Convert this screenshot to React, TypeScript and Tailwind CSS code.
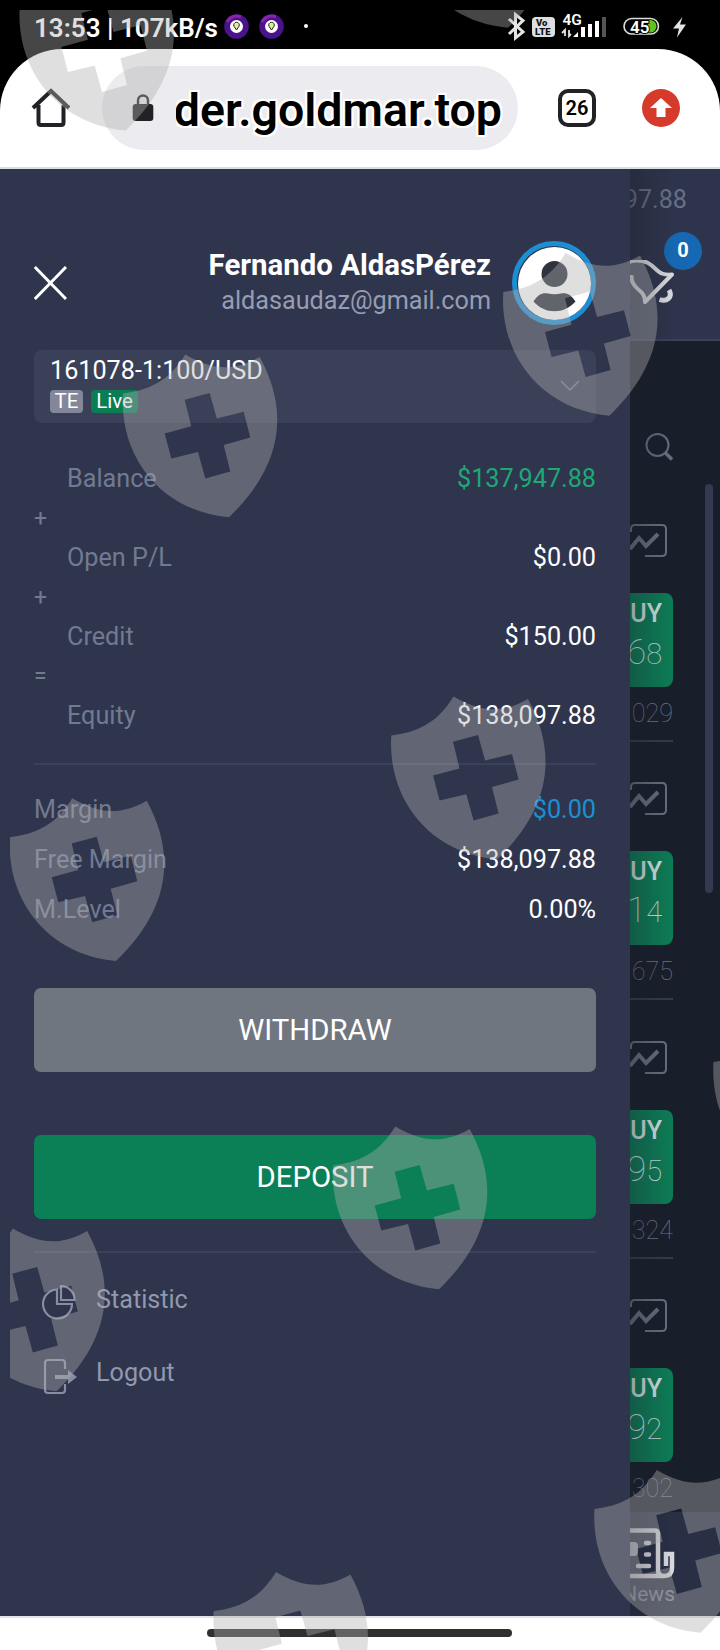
import type { ReactNode } from 'react'

const SHIELD =
  'M0 0C25 -3 46 -12 62.3 -39C90 -22.5 112 -22.5 136.7 -36.6C165 15 162 70 106 123.7C40 118 -4 65 0 0Z' +
  'M61.7 6.2L68.2 32.8L41.7 40L48.3 65L75 58.6L82.3 85L107.3 78L100.7 51.4L127.3 43.9L120.7 18.3L93.8 25L86.7 -.6Z'

const SHIELD_SPOTS = [
  [19.7, 6.9],
  [402, -96],
  [123, 393.5],
  [503.3, 292],
  [391.3, 735.6],
  [10, 837.3],
  [333, 1165.5],
  [-49.5, 1267.5],
  [713.5, 1062],
  [594.5, 1509],
  [213.7, 1611],
]

const QUOTES = [
  { big: '6', small: '8', spread: '029' },
  { big: '1', small: '4', spread: '675' },
  { big: '9', small: '5', spread: '324' },
  { big: '9', small: '2', spread: '302' },
]

function ShieldOverlay() {
  return (
    <svg className="pointer-events-none absolute inset-0 z-30" width="720" height="1650" viewBox="0 0 720 1650">
      <clipPath id="safe">
        <rect x="10" y="10" width="710" height="1640" />
      </clipPath>
      <g clipPath="url(#safe)" fill="#afafaf" fillOpacity=".4" fillRule="evenodd">
        {SHIELD_SPOTS.map(([x, y]) => (
          <path key={`${x}-${y}`} d={SHIELD} transform={`translate(${x} ${y})`} />
        ))}
      </g>
    </svg>
  )
}

function AppBadge() {
  return (
    <svg width="25" height="25" viewBox="0 0 25 25">
      <circle cx="12.5" cy="12.5" r="12.3" fill="#4a138c" />
      <path d="M3 8A11 11 0 0 1 17 3" stroke="#8a24a8" strokeWidth="3" fill="none" />
      <circle cx="12.5" cy="12.5" r="6.5" fill="#fff" />
      <path d="M12.5 16L10 12.300A2.800 2.800 0 1 1 15 12.300Z" fill="#e8e6a0" stroke="#222" strokeWidth="1" />
    </svg>
  )
}

function StatusBar() {
  return (
    <div className="flex h-[49px] items-start">
      <div className="ml-[34px] mt-[12px] w-[188px] whitespace-nowrap text-[26px] leading-[32px] font-semibold text-white">
        13:53 | 107kB/s
      </div>
      <div className="mt-[14px] ml-[2px] flex gap-[10px]">
        <AppBadge />
        <AppBadge />
      </div>
      <div className="mt-[24px] ml-[20px] size-[4px] rounded-full bg-white" />
      <svg className="ml-[198px]" width="183" height="49" viewBox="506 0 183 49" fill="none">
        <path d="M509 19L523 32L515.500 38V14.500L523 20.500L509 34" stroke="#e4e4e4" strokeWidth="3" />
        <rect x="532" y="17" width="23" height="20" rx="4" fill="#dedede" />
        <text x="536" y="25.500" fontSize="9.500" fontWeight="900" fill="#111">Vo</text>
        <text x="535" y="35" fontSize="9.500" fontWeight="900" fill="#111">LTE</text>
        <text x="562.500" y="25" fontSize="15.500" fontWeight="600" fill="#fff">4G</text>
        <path d="M565 36V30L562 33M569 30V36L571 34" stroke="#e4e4e4" strokeWidth="1.800" />
        <path d="M573 37L578 32V37ZM581 37V27H585V37ZM588 37V24H592V37ZM595 37V21H599V37Z" fill="#fff" />
        <path d="M602 37V17H606V37Z" fill="#555" />
        <rect x="624" y="18.500" width="34.500" height="15.500" rx="7.750" stroke="#ddd" strokeWidth="1.600" />
        <path d="M648 20H651A6.300 6.300 0 0 1 651 32.500H648Z" fill="#5fc31f" />
        <text x="630" y="33" fontSize="17" fontWeight="600" fill="#fff" stroke="#000" strokeWidth="2" paintOrder="stroke">45</text>
        <path d="M682.500 17L673 28.500H679L677 37.500L686 24.500H680Z" fill="#e4e4e4" />
      </svg>
    </div>
  )
}

function BrowserBar() {
  return (
    <div className="flex h-[120px] items-start rounded-t-[62px] border-b-2 border-[#d9dde6] bg-white">
      <svg className="mt-[39px] ml-[31px]" width="40" height="40" viewBox="0 0 40 40" fill="none" stroke="#202226" strokeWidth="4">
        <path d="M2 20L20 3L38 20M7.500 17V34.500Q7.500 37 10 37H30Q32.500 37 32.500 34.500V17" />
      </svg>
      <div className="mt-[17px] ml-[31px] flex h-[84px] w-[416px] items-center rounded-full bg-[#ecebf0]">
        <svg className="ml-[30px]" width="22" height="30" viewBox="0 0 22 30">
          <path d="M6 12V7.500A5 5 0 0 1 16 7.500V12" fill="none" stroke="#202226" strokeWidth="2.400" />
          <rect x=".7" y="11" width="20.600" height="17" rx="3" fill="#202226" />
        </svg>
        <div className="ml-[22px] flex h-[70px] w-[328px] justify-end overflow-hidden pr-[2px] text-[46.5px] leading-[74px] font-semibold whitespace-nowrap text-black [text-shadow:2px_0_#fff,-2px_0_#fff,0_2px_#fff,0_-2px_#fff,2px_2px_#fff,-2px_-2px_#fff,2px_-2px_#fff,-2px_2px_#fff]">
          der.goldmar.top
        </div>
      </div>
      <div className="mt-[40px] ml-[40px] flex size-[38px] items-center justify-center rounded-[10px] border-4 border-[#202226] text-[20px] leading-none font-semibold text-black">
        26
      </div>
      <div className="mt-[40px] ml-[46px] flex size-[38px] items-center justify-center rounded-full bg-[#d53a2b]">
        <svg width="22" height="22" viewBox="0 0 22 22" fill="#fff">
          <path d="M11 1L22 11H15.500V20H6.500V11H0Z" />
        </svg>
      </div>
    </div>
  )
}

function Row({ label, value, tone = 'text-white', sign }: { label: string; value: string; tone?: string; sign?: string }) {
  return (
    <>
      <div className="flex h-[40px] items-center justify-between pl-[33px]">
        <span className="text-[#727a92]">{label}</span>
        <span className={tone}>{value}</span>
      </div>
      {sign && <div className="h-[39px] text-[23px] leading-[39px] text-[#727a92]">{sign}</div>}
    </>
  )
}

function MarginRow({ label, value, tone = 'text-white' }: { label: string; value: string; tone?: string }) {
  return (
    <div className="flex h-[50px] items-center justify-between">
      <span className="text-[#727a92]">{label}</span>
      <span className={tone}>{value}</span>
    </div>
  )
}

function MenuItem({ label, children }: { label: string; children: ReactNode }) {
  return (
    <div className="flex h-[73px] items-center">
      <div className="w-[62px] pl-[7px]">{children}</div>
      <span className="text-[#9298ad]">{label}</span>
    </div>
  )
}

function Drawer() {
  return (
    <aside className="flex w-[630px] flex-col bg-[#2f354d] px-[34px] text-[25.2px] leading-[32px]">
      <header className="mt-[72px] flex h-[84px] items-center">
        <svg width="33" height="34" viewBox="0 0 33 34" stroke="#fff" strokeWidth="3">
          <path d="M.8 1L32 33M32 1L.8 33" />
        </svg>
        <div className="ml-auto pb-[1px] text-right">
          <div className="text-[29.4px] leading-[35px] font-bold text-white">Fernando AldasPérez</div>
          <div className="leading-[35px] text-[#979db3]">aldasaudaz@gmail.com</div>
        </div>
        <div className="ml-[21px] flex size-[84px] items-center justify-center rounded-full border-[5px] border-[#1c8fd3]">
          <svg width="73" height="73" viewBox="0 0 73 73">
            <circle cx="36.500" cy="36.500" r="36.500" fill="#fff" />
            <circle cx="36.500" cy="27" r="13" fill="#2f333f" />
            <path d="M15.500 54.500C20 47 25 45.500 30 46.500Q36.500 48 43 46.500C48 45.500 53 47 57.500 54.500C46 67.500 27 67.500 15.500 54.500Z" fill="#2f333f" />
          </svg>
        </div>
      </header>

      <div className="mt-[25px] flex h-[73px] items-start rounded-[8px] bg-[#3b4059] pl-[16px]">
        <div className="pt-[5px]">
          <div className="text-white">161078-1:100/USD</div>
          <div className="mt-[3px] flex gap-[8px] text-[20.5px] leading-[23px] text-white">
            <span className="w-[33px] rounded-[4px] bg-[#82879a] text-center">TE</span>
            <span className="w-[47px] rounded-[4px] bg-[#0b7d55] text-center">Live</span>
          </div>
        </div>
        <svg className="mt-[29px] mr-[16px] ml-auto" width="20" height="14" viewBox="0 0 20 14" fill="none" stroke="#727a92" strokeWidth="1.500">
          <path d="M1 2L10 11L19 2" />
        </svg>
      </div>

      <div className="mt-[36px]">
        <Row label="Balance" value="$137,947.88" tone="text-[#1fa877]" sign="+" />
        <Row label="Open P/L" value="$0.00" sign="+" />
        <Row label="Credit" value="$150.00" sign="=" />
        <Row label="Equity" value="$138,097.88" />
      </div>

      <div className="mt-[27px] h-[2px] bg-[#3b415a]" />

      <div className="mt-[20px]">
        <MarginRow label="Margin" value="$0.00" tone="text-[#1c8fd3]" />
        <MarginRow label="Free Margin" value="$138,097.88" />
        <MarginRow label="M.Level" value="0.00%" />
      </div>

      <button className="mt-[53px] h-[84px] rounded-[7px] bg-[#70767f] pb-[1px] text-[29.3px] text-white">WITHDRAW</button>
      <button className="mt-[63px] h-[84px] rounded-[7px] bg-[#0b7f56] pb-[1px] text-[29.3px] text-white">DEPOSIT</button>

      <div className="mt-[32px] h-[2px] bg-[#3b415a]" />

      <nav className="mt-[10px]">
        <MenuItem label="Statistic">
          <svg className="relative top-[2px]" width="36" height="36" viewBox="0 0 36 36" fill="none" stroke="#878ea3" strokeWidth="2.200">
            <path d="M16 5.500A14.500 14.500 0 1 0 31 20H16Z" />
            <path d="M20 2V16H33.500A13.500 13.500 0 0 0 20 2Z" />
          </svg>
        </MenuItem>
        <MenuItem label="Logout">
          <svg className="relative top-[4px] left-[2px]" width="36" height="38" viewBox="0 0 36 38" fill="none" stroke="#878ea3" strokeWidth="2.200">
            <path d="M22 11V5Q22 2 19 2H5Q2 2 2 5V32Q2 35 5 35H19Q22 35 22 32V26" />
            <path d="M12 19H26" strokeWidth="4" />
            <path d="M25 12L34 19L25 26Z" fill="#878ea3" stroke="none" />
          </svg>
        </MenuItem>
      </nav>
    </aside>
  )
}

function Quote({ big, small, spread }: { big: string; small: string; spread: string }) {
  return (
    <div className="flex h-[258.3px] w-[43px] shrink-0 flex-col items-end overflow-hidden">
      <svg className="mr-[6px] shrink-0" width="42" height="34" viewBox="0 0 42 34" fill="none" stroke="#6a7081" strokeWidth="2">
        <path d="M6 8V5Q6 1 10 1H37Q41 1 41 5V28Q41 32 37 32H20" />
        <path d="M5 25L14 14L21 22L33 10" strokeWidth="4" />
      </svg>
      <div className="mt-[35px] flex h-[94px] w-[100px] shrink-0 flex-col items-end rounded-[8px] bg-[#0d7d56] pr-[11px] text-[#d5e5e2]">
        <div className="mt-[6px] text-[25px] leading-[30px] font-medium">BUY</div>
        <div className="mt-[2px] text-[35px] leading-[43px] font-thin">
          {big}
          <span className="text-[29px]">{small}</span>
        </div>
      </div>
      <div className="mt-[11px] h-[32px] text-[25.2px] leading-[32px] font-thin text-[#737a8c]">{spread}</div>
      <div className="mt-[10px] h-[2px] w-[60px] shrink-0 bg-[#363b4c]" />
    </div>
  )
}

function MarketStrip() {
  return (
    <section className="relative flex w-[90px] flex-col overflow-hidden bg-[#191e2b]">
      <div className="h-[172px] shrink-0 border-b-2 border-[#3b4156] bg-[#2e344b]">
        <div className="mt-[15px] flex justify-end pr-[33px] text-[25.2px] leading-[32px] text-[#697086]">97.88</div>
        <div className="flex">
          <svg className="mt-[44px] shrink-0" width="46" height="52" viewBox="0 0 46 52" fill="none" stroke="#dadbdf" strokeWidth="4">
            <path d="M-2 2.500C4 0 12 0 18 3C24 6 27 12 32 13.500Q36 15 42 14.500L15 42Q15 35 10 31C4 26 1 22 1.500 15" strokeLinejoin="round" />
            <path d="M39 30C43 37 37 42 29.500 39.500" strokeWidth="5" />
          </svg>
          <div className="relative top-[16px] left-[-12px] flex size-[38px] shrink-0 items-center justify-center rounded-full bg-[#1668b2] pb-[2px] text-[20px] font-bold text-white">
            0
          </div>
        </div>
      </div>
      <svg className="mt-[91px] ml-[15px] shrink-0" width="30" height="30" viewBox="0 0 30 30" fill="none" stroke="#686e80" strokeWidth="2">
        <circle cx="12.500" cy="13" r="11" />
        <path d="M20 20.500L27 27.500" strokeWidth="3.500" />
      </svg>
      <div className="mt-[62px] flex h-[988px] shrink-0 flex-col overflow-hidden">
        {QUOTES.map((q) => (
          <Quote key={q.spread} {...q} />
        ))}
      </div>
      <div className="flex h-[104px] shrink-0 flex-col bg-[#292f44]">
        <svg className="mt-[14px]" width="46" height="54" viewBox="0 0 46 54" fill="none" stroke="#dadbdf" strokeWidth="4.500">
          <path d="M0 4.500H25Q28 4.500 28 8V44Q28 50 34 50Q42 50 42 42V28H36V40M0 50H35" />
          <path d="M0 16H4Q8 16 8 20V26Q8 30 4 30H0Z" fill="#b8bbc4" stroke="none" />
          <path d="M16 17H19M16 28.500H19M8 40H19" strokeLinecap="round" strokeWidth="4.500" />
        </svg>
        <div className="flex w-[45px] justify-end text-[21px] leading-[28px] text-[#7d8497]">News</div>
      </div>
      <div className="absolute top-[315px] right-[7px] h-[409px] w-[8px] rounded-full bg-[#353a52]" />
      <div className="absolute inset-y-0 left-0 w-[44px] bg-linear-to-r from-[#191e2b]/35 to-transparent" />
    </section>
  )
}

export default function App() {
  return (
    <div className="relative flex h-[1650px] w-[720px] flex-col overflow-hidden bg-black font-['Roboto',sans-serif]">
      <StatusBar />
      <BrowserBar />
      <div className="flex h-[1447px]">
        <Drawer />
        <MarketStrip />
      </div>
      <footer className="flex h-[34px] justify-center border-t-2 border-[#e3e1ea] bg-white">
        <div className="mt-[11px] mr-[2px] h-[8px] w-[305px] rounded-full bg-[#303030]" />
      </footer>
      <ShieldOverlay />
    </div>
  )
}
